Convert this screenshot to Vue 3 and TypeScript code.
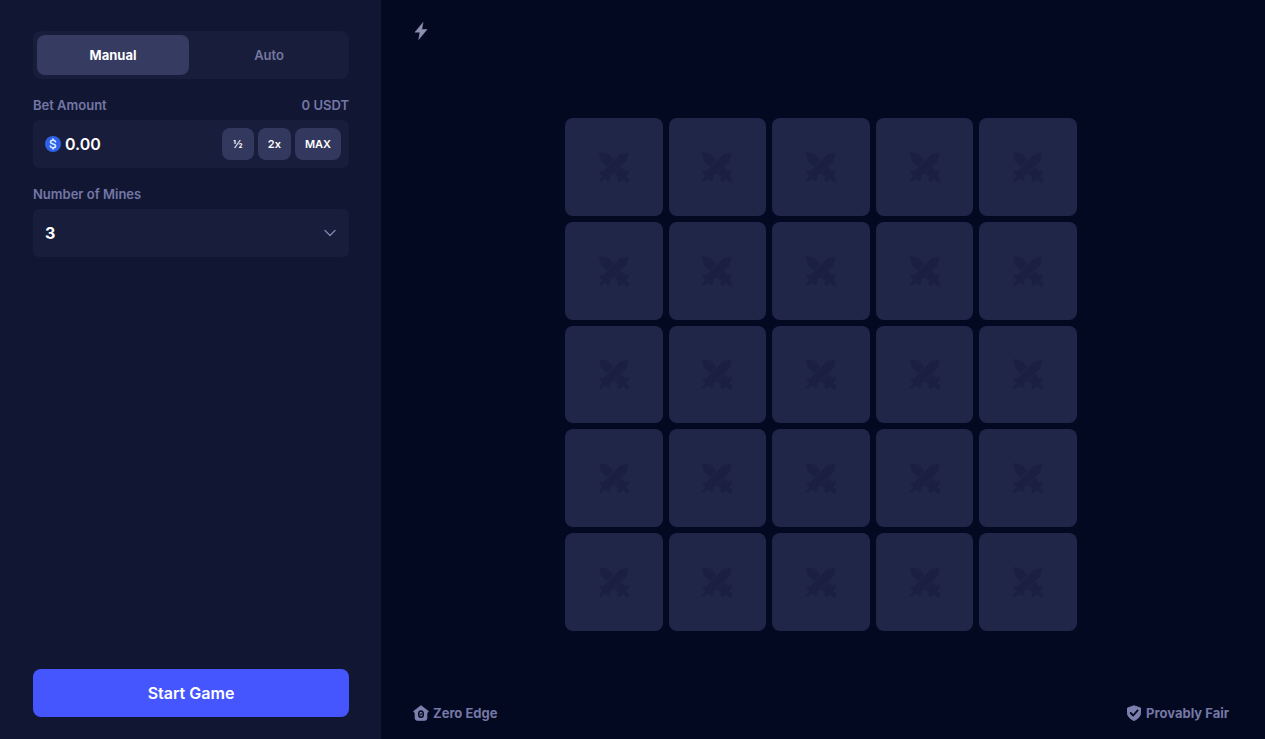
<script setup lang="ts">
import { ref } from 'vue'

type Mode = 'Manual' | 'Auto'

const modes: Mode[] = ['Manual', 'Auto']
const mode = ref<Mode>('Manual')
const bet = ref('0.00')
const mines = ref(3)
const tiles = Array.from({ length: 25 }, (_, i) => i + 1)

function scaleBet(factor: number): void {
  bet.value = ((Number.parseFloat(bet.value) || 0) * factor).toFixed(2)
}
</script>

<template>
  <div class="game">
    <aside class="panel">
      <div class="tabs" role="group" aria-label="Bet mode">
        <button
          v-for="m in modes"
          :key="m"
          type="button"
          class="tab"
          :class="{ active: m === mode }"
          :aria-pressed="m === mode"
          @click="mode = m"
        >
          {{ m }}
        </button>
      </div>

      <div class="field">
        <div class="caption">
          <label for="bet">Bet Amount</label>
          <span>0 USDT</span>
        </div>
        <div class="box bet-box">
          <svg class="coin" viewBox="0 0 16 16" aria-hidden="true">
            <circle cx="8" cy="8" r="8" fill="#2f62e8" />
            <path
              d="M10.5 5.700C10.200 4.700 9.300 4.200 8 4.200C6.500 4.200 5.500 4.900 5.500 6C5.500 8.600 10.600 7.300 10.600 9.900C10.600 11.100 9.500 11.800 8 11.800C6.500 11.800 5.600 11.200 5.300 10.100M8 3V4.200M8 11.800V13"
              fill="none"
              stroke="#d9ecff"
              stroke-width="1.600"
              stroke-linecap="round"
            />
          </svg>
          <input id="bet" v-model="bet" class="amount" type="text" inputmode="decimal" />
          <div class="chips">
            <button type="button" class="chip" @click="scaleBet(0.5)">½</button>
            <button type="button" class="chip" @click="scaleBet(2)">2x</button>
            <button type="button" class="chip">MAX</button>
          </div>
        </div>
      </div>

      <div class="field">
        <div class="caption"><label for="mines">Number of Mines</label></div>
        <div class="box select-box">
          <select id="mines" v-model="mines" class="select">
            <option v-for="n in 24" :key="n" :value="n">{{ n }}</option>
          </select>
          <svg class="chevron" viewBox="0 0 14 14" aria-hidden="true">
            <path d="M2 4.500L7 9.500L12 4.500" fill="none" stroke="#7d80a8" stroke-width="1.400" stroke-linecap="round" stroke-linejoin="round" />
          </svg>
        </div>
      </div>

      <button type="button" class="start">Start Game</button>
    </aside>

    <main class="stage">
      <header class="top">
        <button type="button" class="turbo" aria-label="Turbo">
          <svg viewBox="0 0 16 20" aria-hidden="true">
            <path d="M10 1.500L2 11.200H7L5.700 18.500L14 8.500H8.800Z" fill="#8e90b0" stroke="#8e90b0" stroke-width="0.500" />
          </svg>
        </button>
      </header>

      <div class="board-area">
        <div class="board">
          <button v-for="t in tiles" :key="t" type="button" class="tile" :aria-label="`Tile ${t}`">
            <svg viewBox="0 0 32 32" aria-hidden="true">
              <g fill="#1b2041">
                <path d="M1 1L10 3L27 20L30 19L31 22L28 25L32 29L29 32L25 28L22 31L19 29L20 26L3 10Z" />
                <path
                  d="M31 1L22 3L5 20L2 19L1 22L4 25L0 29L3 32L7 28L10 31L13 29L12 26L29 10Z"
                  stroke="#20264a"
                  stroke-width="1"
                />
              </g>
            </svg>
          </button>
        </div>
      </div>

      <footer class="bottom">
        <a href="#zero-edge" class="note">
          <svg viewBox="0 0 16 16" aria-hidden="true">
            <path d="M8 0.500L15.500 6.300L14.500 7.700L14 7.400V13Q14 15.500 11.500 15.500H4.500Q2 15.500 2 13V7.400L1.500 7.700L0.500 6.300Z" fill="#7d7fae" stroke="#7d7fae" stroke-width="0.600" stroke-linejoin="round" />
            <ellipse cx="8" cy="9.200" rx="2.300" ry="3.100" fill="none" stroke="#050a22" stroke-width="1.500" />
            <path d="M7.100 9.900L8.900 8.500" stroke="#050a22" stroke-width="1.300" />
          </svg>
          <span>Zero Edge</span>
        </a>
        <a href="#provably-fair" class="note">
          <svg viewBox="0 0 16 16" aria-hidden="true">
            <path d="M8 0.800L14.500 3V7.500C14.500 11.500 11.800 14 8 15.500C4.200 14 1.500 11.500 1.500 7.500V3Z" fill="#7d7fae" stroke="#7d7fae" stroke-linejoin="round" />
            <path d="M4.700 8L7.200 10.500L11.600 5.400" fill="none" stroke="#050a22" stroke-width="1.900" stroke-linecap="round" stroke-linejoin="round" />
          </svg>
          <span>Provably Fair</span>
        </a>
      </footer>
    </main>
  </div>
</template>

<style>
body {
  margin: 0;
  background: #040922;
}
</style>

<style scoped>
.game {
  display: grid;
  grid-template-columns: minmax(300px, 30.12%) 1fr;
  min-height: 100vh;
  background: #040922;
  font-family: Inter, 'Open Sans', sans-serif;
  font-size: 13px;
  line-height: 20px;
}

button,
input,
select {
  margin: 0;
  padding: 0;
  border: 0;
  background: none;
  color: inherit;
  font: inherit;
}

button {
  cursor: pointer;
}

svg {
  display: block;
}

.panel {
  display: flex;
  flex-direction: column;
  gap: 16px;
  box-sizing: border-box;
  padding: 31px 32px 22px 33px;
  background: #111632;
}

.tabs {
  display: flex;
  padding: 4px;
  border-radius: 8px;
  background: #191d3c;
}

.tab {
  flex: 1;
  height: 40px;
  border-radius: 8px;
  color: #74779e;
  font-weight: 600;
}

.tab.active {
  margin-right: 4px;
  background: #363b61;
  color: #fff;
  font-weight: 700;
}

.field {
  display: flex;
  flex-direction: column;
  gap: 5px;
}

.caption {
  display: flex;
  justify-content: space-between;
  color: #7477a6;
  font-weight: 600;
}

.box {
  display: flex;
  align-items: center;
  height: 48px;
  border-radius: 6px;
  background: #191d3c;
  color: #fff;
  font-size: 16px;
  font-weight: 600;
}

.bet-box {
  padding: 0 8px 0 12px;
}

.coin {
  flex: none;
  width: 16px;
  height: 16px;
}

.amount {
  flex: 1;
  min-width: 0;
  margin-left: 4px;
}

.chips {
  display: flex;
  gap: 4px;
}

.chip {
  min-width: 32px;
  height: 32px;
  padding: 0 10px;
  border-radius: 8px;
  background: #33385e;
  font-size: 11px;
}

.select-box {
  display: grid;
}

.select,
.chevron {
  grid-area: 1 / 1;
}

.select {
  height: 48px;
  padding: 0 12px;
  appearance: none;
  font-weight: 700;
}

.select option {
  background: #191d3c;
}

.chevron {
  justify-self: end;
  width: 14px;
  height: 14px;
  margin-right: 12px;
  pointer-events: none;
}

.start {
  height: 48px;
  margin-top: auto;
  border-radius: 8px;
  background: #4656ff;
  color: #fff;
  font-size: 16px;
  font-weight: 600;
}

.stage {
  display: flex;
  flex-direction: column;
  padding: 20px 36px 16px 32px;
}

.top {
  display: flex;
  margin-bottom: 4px;
}

.turbo svg {
  width: 16px;
  height: 22px;
}

.board-area {
  display: flex;
  flex: 1;
  align-items: center;
  justify-content: center;
}

.board {
  display: grid;
  grid-template-columns: repeat(5, 1fr);
  gap: 6px;
  width: min(512px, 100%);
}

.tile {
  display: grid;
  place-items: center;
  aspect-ratio: 1;
  border-radius: 8px;
  background: #202648;
}

.tile svg {
  width: 32px;
  height: 32px;
}

.bottom {
  display: flex;
  justify-content: space-between;
}

.note {
  display: flex;
  align-items: center;
  gap: 4px;
  color: #7577a5;
  font-weight: 700;
  text-decoration: none;
}

.note svg {
  width: 16px;
  height: 16px;
}
</style>
